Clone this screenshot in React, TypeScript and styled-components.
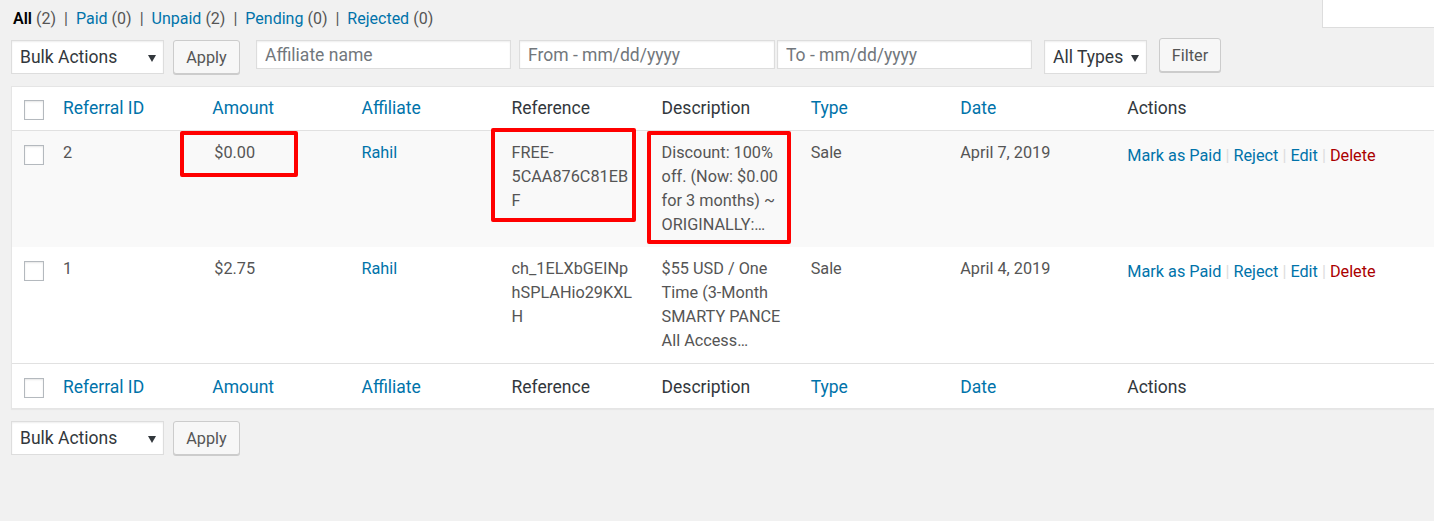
import React from 'react';
import styled, {createGlobalStyle} from 'styled-components';

type Referral = {
  id: string;
  amount: string;
  affiliate: string;
  reference: string[];
  description: string[];
  type: string;
  date: string;
}

type Column = {
  label: string;
  sortable: boolean;
}

const columns: Column[] = [
  {label: 'Referral ID', sortable: true},
  {label: 'Amount', sortable: true},
  {label: 'Affiliate', sortable: true},
  {label: 'Reference', sortable: false},
  {label: 'Description', sortable: false},
  {label: 'Type', sortable: true},
  {label: 'Date', sortable: true},
  {label: 'Actions', sortable: false},
];

const referrals: Referral[] = [
  {
    id: '2',
    amount: '$0.00',
    affiliate: 'Rahil',
    reference: ['FREE-', '5CAA876C81EB', 'F'],
    description: ['Discount: 100%', 'off. (Now: $0.00', 'for 3 months) ~', 'ORIGINALLY:…'],
    type: 'Sale',
    date: 'April 7, 2019',
  },
  {
    id: '1',
    amount: '$2.75',
    affiliate: 'Rahil',
    reference: ['ch_1ELXbGEINp', 'hSPLAHio29KXL', 'H'],
    description: ['$55 USD / One', 'Time (3-Month', 'SMARTY PANCE', 'All Access…'],
    type: 'Sale',
    date: 'April 4, 2019',
  },
];

const views = [
  {label: 'All', count: 2, current: true},
  {label: 'Paid', count: 0, current: false},
  {label: 'Unpaid', count: 2, current: false},
  {label: 'Pending', count: 0, current: false},
  {label: 'Rejected', count: 0, current: false},
];

const colWidths = [38.5, 149.2, 149.2, 150, 150, 149, 149.5, 167, 390];

// annotation boxes drawn over the screenshot
const highlights = [
  {left: 180, top: 131, width: 118, height: 46},
  {left: 491, top: 128, width: 145, height: 94},
  {left: 647, top: 131, width: 144, height: 113},
];

const GlobalStyle = createGlobalStyle`
  html, body {
    margin: 0;
    padding: 0;
    background: #f1f1f1;
    overflow: hidden;
  }
  body {
    font-family: Roboto, "Liberation Sans", sans-serif;
    color: #444;
  }
`;

const BulkBar = () => (
  <Toolbar>
    <SelectBox $width={153}>
      <span>Bulk Actions</span>
      <Caret/>
    </SelectBox>
    <Button $ml={9} $width={67}>Apply</Button>
  </Toolbar>
);

const HeaderCells = () => (
  <tr>
    <CheckHead><Checkbox/></CheckHead>
    {columns.map((c) => (
      <Th key={c.label} $link={c.sortable}>{c.label}</Th>
    ))}
  </tr>
);

export default function App() {
  return (
    <Page>
      <GlobalStyle/>
      <TopBar>
        <Views>
          {views.map((v, i) => (
            <React.Fragment key={v.label}>
              {i > 0 && <Sep>|</Sep>}
              <ViewLink $current={v.current}>{v.label}</ViewLink>
              <Count>({v.count})</Count>
            </React.Fragment>
          ))}
        </Views>
        <SearchInput/>
      </TopBar>

      <Toolbar>
        <SelectBox $width={153}>
          <span>Bulk Actions</span>
          <Caret/>
        </SelectBox>
        <Button $ml={9} $width={67}>Apply</Button>
        <TextInput $ml={16} $width={255} placeholder='Affiliate name'/>
        <TextInput $ml={8} $width={256} placeholder='From - mm/dd/yyyy'/>
        <TextInput $ml={2} $width={255} placeholder='To - mm/dd/yyyy'/>
        <SelectBox $width={103} $ml={12}>
          <span>All Types</span>
          <Caret/>
        </SelectBox>
        <Button $ml={12} $width={62} $mt={-2}>Filter</Button>
      </Toolbar>

      <Table>
        <colgroup>
          {colWidths.map((w, i) => <Col key={i} $w={w}/>)}
        </colgroup>
        <thead>
          <HeaderCells/>
        </thead>
        <tbody>
          {referrals.map((r, i) => (
            <Row key={r.id} $striped={i % 2 === 0}>
              <CheckCell><Checkbox/></CheckCell>
              <Td>{r.id}</Td>
              <Td $indent={2}>{r.amount}</Td>
              <Td><Link>{r.affiliate}</Link></Td>
              <Td>{r.reference.map((l) => <Line key={l}>{l}</Line>)}</Td>
              <Td>{r.description.map((l) => <Line key={l}>{l}</Line>)}</Td>
              <Td>{r.type}</Td>
              <Td>{r.date}</Td>
              <ActionsCell>
                <Link>Mark as Paid</Link>
                <ActionSep>|</ActionSep>
                <Link>Reject</Link>
                <ActionSep>|</ActionSep>
                <Link>Edit</Link>
                <ActionSep>|</ActionSep>
                <DeleteLink>Delete</DeleteLink>
              </ActionsCell>
            </Row>
          ))}
        </tbody>
        <Foot>
          <HeaderCells/>
        </Foot>
      </Table>

      <BottomNav>
        <BulkBar/>
      </BottomNav>

      {highlights.map((h, i) => (
        <Highlight key={i} style={{left: h.left, top: h.top, width: h.width, height: h.height}}/>
      ))}
    </Page>
  );
}

const Page = styled.div`
  position: relative;
  padding-left: 11px;
  width: 1434px;
  height: 521px;
  box-sizing: border-box;
`;

const TopBar = styled.div`
  display: flex;
  justify-content: space-between;
  align-items: flex-start;
  height: 40px;
`;

const Views = styled.div`
  display: flex;
  align-items: center;
  padding-top: 7px;
  padding-left: 2px;
  font-size: 16px;
  line-height: 24px;
  color: #555;
`;

const ViewLink = styled.span<{$current: boolean}>`
  color: ${(p) => p.$current ? '#000' : '#0073aa'};
  font-weight: ${(p) => p.$current ? 600 : 400};
  margin-right: 4px;
`;

const Count = styled.span`
  color: #555;
`;

const Sep = styled.span`
  color: #555;
  margin: 0 8px;
`;

const SearchInput = styled.div`
  width: 112px;
  height: 28px;
  background: #fff;
  border: 1px solid #ddd;
  border-top: none;
  border-right: none;
  box-sizing: border-box;
`;

const Toolbar = styled.div`
  display: flex;
  align-items: flex-start;
  height: 35px;
`;

const BottomNav = styled.div`
  margin-top: 12px;
`;

const SelectBox = styled.div<{$width: number; $ml?: number}>`
  display: flex;
  align-items: center;
  justify-content: space-between;
  width: ${(p) => p.$width}px;
  height: 34px;
  margin-left: ${(p) => p.$ml || 0}px;
  padding: 0 7px 0 8px;
  box-sizing: border-box;
  background: #fff;
  border: 1px solid #ddd;
  box-shadow: inset 0 1px 2px rgba(0, 0, 0, 0.07);
  font-size: 17.5px;
  color: #32373c;
`;

const Caret = styled.span`
  width: 0;
  height: 0;
  border-left: 4px solid transparent;
  border-right: 4px solid transparent;
  border-top: 7px solid #32373c;
  margin-top: 2px;
`;

const Button = styled.div<{$ml: number; $width: number; $mt?: number}>`
  display: flex;
  align-items: center;
  justify-content: center;
  width: ${(p) => p.$width}px;
  height: 34px;
  margin-left: ${(p) => p.$ml}px;
  margin-top: ${(p) => p.$mt || 0}px;
  box-sizing: border-box;
  background: #f7f7f7;
  border: 1px solid #ccc;
  border-radius: 3px;
  box-shadow: 0 1px 0 #ccc;
  font-size: 16.25px;
  color: #555;
`;

const TextInput = styled.input<{$ml: number; $width: number}>`
  width: ${(p) => p.$width}px;
  height: 29px;
  margin: 0 0 0 ${(p) => p.$ml}px;
  padding: 0 8px;
  box-sizing: border-box;
  background: #fff;
  border: 1px solid #ddd;
  box-shadow: inset 0 1px 2px rgba(0, 0, 0, 0.07);
  font-family: Roboto, "Liberation Sans", sans-serif;
  font-size: 17.5px;
  color: #32373c;
  outline: none;

  &::placeholder {
    color: #72777c;
  }
`;

const Table = styled.table`
  margin-top: 11px;
  width: 1495px;
  table-layout: fixed;
  border-collapse: separate;
  border-spacing: 0;
  background: #fff;
  border: 1px solid #e5e5e5;
  box-shadow: 0 1px 1px rgba(0, 0, 0, 0.04);
`;

const Col = styled.col<{$w: number}>`
  width: ${(p) => p.$w}px;
`;

const Th = styled.th<{$link: boolean}>`
  text-align: left;
  font-weight: 400;
  font-size: 17.5px;
  line-height: 24px;
  padding: 9px 12.5px 10px;
  color: ${(p) => p.$link ? '#0073aa' : '#32373c'};
  border-bottom: 1px solid #e1e1e1;
  white-space: nowrap;
`;

const CheckHead = styled.th`
  padding: 13px 0 0 12px;
  vertical-align: top;
  border-bottom: 1px solid #e1e1e1;
`;

const Foot = styled.tfoot`
  & th {
    border-bottom: none;
    border-top: 1px solid #e1e1e1;
    padding-top: 11px;
    padding-bottom: 9px;
  }
  & th:first-child {
    padding-top: 14px;
    padding-bottom: 0;
  }
`;

const Row = styled.tr<{$striped: boolean}>`
  background: ${(p) => p.$striped ? '#f9f9f9' : '#fff'};
`;

const Td = styled.td<{$indent?: number}>`
  vertical-align: top;
  padding: 10px 12.5px 10px ${(p) => 12.5 + (p.$indent || 0)}px;
  font-size: 16.25px;
  line-height: 24px;
  color: #555;
`;

const CheckCell = styled.td`
  vertical-align: top;
  padding: 14px 0 0 12px;
`;

const ActionsCell = styled(Td)`
  padding-top: 13px;
  white-space: nowrap;
`;

const Line = styled.div``;

const Checkbox = styled.span`
  display: block;
  width: 20px;
  height: 20px;
  box-sizing: border-box;
  background: #fff;
  border: 1px solid #b4b9be;
  box-shadow: inset 0 1px 2px rgba(0, 0, 0, 0.1);
`;

const Link = styled.span`
  color: #0073aa;
`;

const DeleteLink = styled.span`
  color: #a00;
`;

const ActionSep = styled.span`
  color: #ddd;
  margin: 0 4px;
`;

const Highlight = styled.div`
  position: absolute;
  box-sizing: border-box;
  border: 4px solid #f00;
  border-radius: 2px;
  pointer-events: none;
`;
